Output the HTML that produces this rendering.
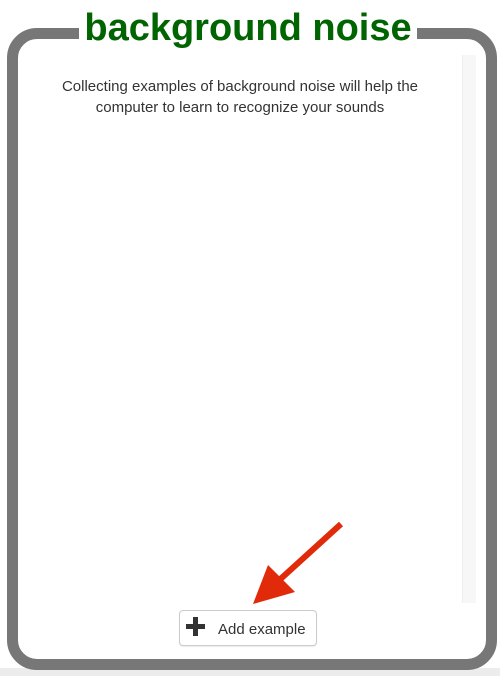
<!DOCTYPE html>
<html><head><style>
html,body{margin:0;padding:0;width:500px;height:676px;overflow:hidden;background:#fff;font-family:"Liberation Sans",sans-serif;}
.bottom{position:absolute;left:0;top:668px;width:500px;height:8px;background:#ececec;}
.box{position:absolute;left:7px;top:28px;width:468px;height:620px;border:11px solid #777;border-radius:30px;background:#fff;}
.title{position:absolute;left:79px;top:7px;width:338px;text-align:center;background:#fff;color:#006400;font-weight:bold;font-size:38px;line-height:42px;white-space:nowrap;}
.sb{position:absolute;left:462px;top:55px;width:13px;height:548px;background:#f7f7f7;border-left:1px solid #eee;}
.p{position:absolute;left:45px;top:76px;width:390px;text-align:center;color:#333;font-size:15px;line-height:21px;}
.btn{position:absolute;left:179px;top:610px;width:138px;height:36px;box-sizing:border-box;border:1px solid #ccc;border-radius:4px;background:#fff;box-shadow:0 1px 1px rgba(0,0,0,.08);}
.btn span{position:absolute;left:38px;top:10px;font-size:15px;color:#333;}
.plus1{position:absolute;left:6px;top:13px;width:19px;height:5px;background:#333;}
.plus2{position:absolute;left:13px;top:6px;width:5px;height:19px;background:#333;}
</style></head><body>
<div class="bottom"></div>
<div class="box"></div>
<div class="sb"></div>
<div class="title">background noise</div>
<div class="p">Collecting examples of background noise will help the computer to learn to recognize your sounds</div>
<svg style="position:absolute;left:0;top:0" width="500" height="676">
<line x1="341" y1="524" x2="275" y2="584" stroke="#e02a0a" stroke-width="6"/>
<polygon points="253,604 268,565 295,592" fill="#e02a0a"/>
</svg>
<div class="btn"><div class="plus1"></div><div class="plus2"></div><span>Add example</span></div>
</body></html>
